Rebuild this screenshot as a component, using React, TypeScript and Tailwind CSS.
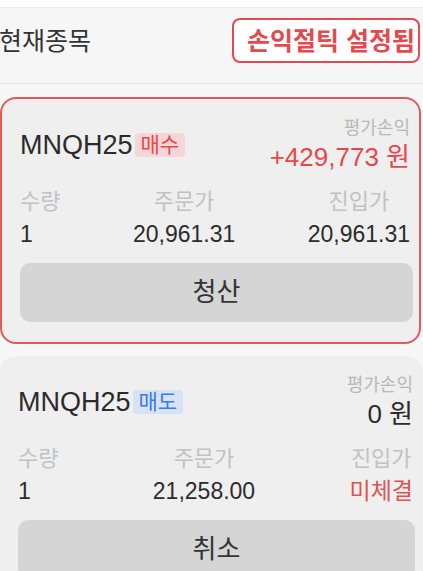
const positions = [
  {
    code: 'MNQH25',
    side: '매수',
    sideClass: 'bg-[#f6d6d7] text-[#e8474b]',
    pnl: '+429,773 원',
    pnlClass: 'text-[#e8474b]',
    qty: '1',
    orderPrice: '20,961.31',
    entry: '20,961.31',
    entryClass: 'text-[#2b2b2b]',
    action: '청산',
    active: true,
  },
  {
    code: 'MNQH25',
    side: '매도',
    sideClass: 'bg-[#d7e2f4] text-[#3a7be4]',
    pnl: '0 원',
    pnlClass: 'text-[#2b2b2b]',
    qty: '1',
    orderPrice: '21,258.00',
    entry: '미체결',
    entryClass: 'text-[#e25252]',
    action: '취소',
    active: false,
  },
];

export default function App() {
  return (
    <div className="w-[423px] min-h-[571px] overflow-hidden bg-[#f7f7f7] font-[family-name:'Liberation_Sans','Noto_Sans_CJK_KR',sans-serif]">
      <div className="h-[8px] bg-white border-b border-[#ebebeb]" />
      <header className="flex items-center justify-between pt-[10px] pb-[20px] bg-[#f6f6f6] border-b border-[#e6e6e6]">
        <h1 className="text-[25px] leading-[30px] text-[#333] -ml-[1px]">현재종목</h1>
        <button className="h-[45px] w-[188px] mr-[3px] pl-[13px] text-left border-2 border-[#e5484d] rounded-[8px] bg-white text-[25px] leading-[30px] font-semibold text-[#e5484d] whitespace-nowrap">
          손익절틱 설정됨
        </button>
      </header>

      <div className="flex flex-col gap-[12px] mt-[13px]">
        {positions.map((p, i) => (
          <div
            key={i}
            className={
              p.active
                ? 'w-[421px] border-2 border-[#e25a58] rounded-[16px] bg-[#efefef] pt-[17px] pb-[20px] pl-[18px] pr-[9px]'
                : 'w-[423px] rounded-[16px] bg-[#efefef] pt-[17px] pb-[20px] pl-[18px] pr-[10px]'
            }
          >
            <div className="flex items-center justify-between">
              <div className="flex items-center gap-[2px]">
                <span className="text-[27px] leading-[32px] text-[#2b2b2b]">{p.code}</span>
                <span className={`text-[21px] leading-[24px] px-[6px] rounded-[4px] ${p.sideClass}`}>{p.side}</span>
              </div>
              <div className="flex flex-col items-end">
                <span className="text-[18px] leading-[24px] text-[#b8b8b8]">평가손익</span>
                <span className={`text-[26px] leading-[34px] ${p.pnlClass}`}>{p.pnl}</span>
              </div>
            </div>

            <div className="mt-[15px] flex justify-between">
              <div className="flex flex-col items-start">
                <span className="text-[22px] leading-[26px] text-[#c2c2c2]">수량</span>
                <span className="mt-[5px] text-[23px] leading-[28px] text-[#2b2b2b]">{p.qty}</span>
              </div>
              <div className="flex flex-col items-center">
                <span className="text-[22px] leading-[26px] text-[#c2c2c2]">주문가</span>
                <span className="mt-[5px] text-[23px] leading-[28px] text-[#2b2b2b]">{p.orderPrice}</span>
              </div>
              <div className="flex flex-col items-center">
                <span className="text-[22px] leading-[26px] text-[#c2c2c2]">진입가</span>
                <span className={`mt-[5px] text-[23px] leading-[28px] ${p.entryClass}`}>{p.entry}</span>
              </div>
            </div>

            <button
              className={
                p.active
                  ? 'mt-[15px] w-[calc(100%+3px)] h-[59px] rounded-[10px] bg-[#d5d5d5] text-[26px] text-[#333]'
                  : 'mt-[15px] w-[calc(100%+2px)] h-[59px] rounded-[10px] bg-[#d5d5d5] text-[26px] text-[#333]'
              }
            >
              {p.action}
            </button>
          </div>
        ))}
      </div>
    </div>
  );
}
